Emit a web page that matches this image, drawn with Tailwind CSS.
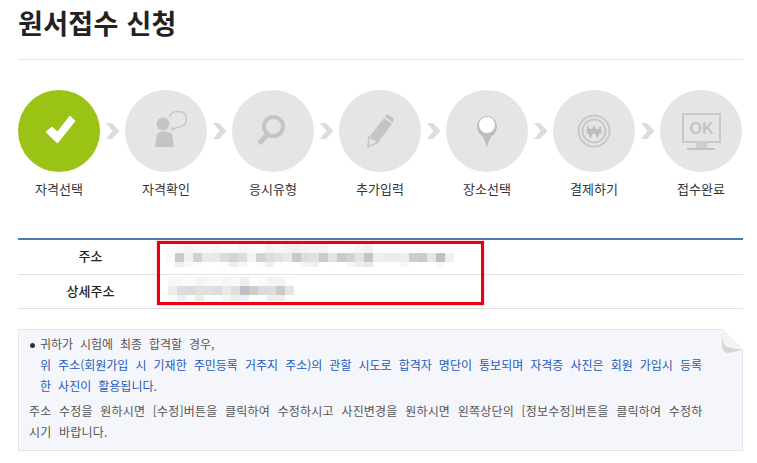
<!DOCTYPE html>
<html lang="ko">
<head>
    <meta charset="UTF-8">
    <title>원서접수 신청</title>
    <script src="https://cdn.jsdelivr.net/npm/@tailwindcss/browser@4"></script>
</head>
<body class="bg-white font-['Noto_Sans_CJK_KR','Noto_Sans',sans-serif] text-[#222]">
<div class="w-[725px] ml-[18px]">

    <!-- 제목 -->
    <div class="h-[60px] border-b border-[#e6e6e6]">
        <h1 class="text-[27px] leading-[45px] tracking-[0.3px] font-bold text-[#222]">원서접수 신청</h1>
    </div>

    <!-- 단계 -->
    <div class="flex mt-[30px]">
        <div class="w-[82px] flex flex-col items-center">
            <svg class="w-[82px] h-[82px]" viewBox="0 0 82 82">
                <circle cx="41" cy="41" r="41" fill="#9bc316"/>
                <polygon points="28,42 34,37 39.5,42 52,26 57,31 39.5,53" fill="#fff" stroke="#fff" stroke-linejoin="round"/>
            </svg>
            <span class="mt-[7px] text-[13px] leading-5 whitespace-nowrap text-[#333]">자격선택</span>
        </div>
        <div class="w-[25px] h-[82px] flex items-center justify-center">
            <svg class="w-[14px] h-[16px]" viewBox="0 0 14 16"><polygon points="0,0 6,0 13.5,8 6,16 0,16 6.5,8" fill="#dcdcdc"/></svg>
        </div>
        <div class="w-[82px] flex flex-col items-center">
            <svg class="w-[82px] h-[82px]" viewBox="0 0 82 82">
                <circle cx="41" cy="41" r="41" fill="#e5e5e5"/>
                <circle cx="38" cy="34" r="6.5" fill="#c4c4c4"/>
                <path d="M30 57 L31.500 46 Q32.500 41.500 38 41.500 Q47 41.500 47.500 46 L49 57 Z" fill="#c4c4c4"/>
                <path d="M44.500 27 Q46 21.500 52.500 21.500 Q61.500 21.500 61.500 29 Q61.500 36.500 52 37.500 L47 40 L47 36.500" fill="none" stroke="#c8c8c8" stroke-width="1.500"/>
            </svg>
            <span class="mt-[7px] text-[13px] leading-5 whitespace-nowrap text-[#333]">자격확인</span>
        </div>
        <div class="w-[25px] h-[82px] flex items-center justify-center">
            <svg class="w-[14px] h-[16px]" viewBox="0 0 14 16"><polygon points="0,0 6,0 13.5,8 6,16 0,16 6.5,8" fill="#dcdcdc"/></svg>
        </div>
        <div class="w-[82px] flex flex-col items-center">
            <svg class="w-[82px] h-[82px]" viewBox="0 0 82 82">
                <circle cx="41" cy="41" r="41" fill="#e5e5e5"/>
                <circle cx="41.500" cy="36.500" r="9.500" fill="none" stroke="#c4c4c4" stroke-width="4"/>
                <line x1="28.500" y1="52" x2="35" y2="45" stroke="#c4c4c4" stroke-width="5" stroke-linecap="round"/>
            </svg>
            <span class="mt-[7px] text-[13px] leading-5 whitespace-nowrap text-[#333]">응시유형</span>
        </div>
        <div class="w-[25px] h-[82px] flex items-center justify-center">
            <svg class="w-[14px] h-[16px]" viewBox="0 0 14 16"><polygon points="0,0 6,0 13.5,8 6,16 0,16 6.5,8" fill="#dcdcdc"/></svg>
        </div>
        <div class="w-[82px] flex flex-col items-center">
            <svg class="w-[82px] h-[82px]" viewBox="0 0 82 82">
                <circle cx="41" cy="41" r="41" fill="#e5e5e5"/>
                <polygon points="31,46 45,28 53,34 39.500,51.500" fill="#c4c4c4"/>
                <polygon points="46,26.500 48,24 54,28 55,30 53.500,32.500" fill="#c4c4c4"/>
                <path d="M30 47 L29 57 L39.500 52 Z" fill="#e5e5e5" stroke="#c4c4c4" stroke-width="1.500"/>
            </svg>
            <span class="mt-[7px] text-[13px] leading-5 whitespace-nowrap text-[#333]">추가입력</span>
        </div>
        <div class="w-[25px] h-[82px] flex items-center justify-center">
            <svg class="w-[14px] h-[16px]" viewBox="0 0 14 16"><polygon points="0,0 6,0 13.5,8 6,16 0,16 6.5,8" fill="#dcdcdc"/></svg>
        </div>
        <div class="w-[82px] flex flex-col items-center">
            <svg class="w-[82px] h-[82px]" viewBox="0 0 82 82">
                <circle cx="41" cy="41" r="41" fill="#e5e5e5"/>
                <path d="M31 36 A10 10 0 0 1 51 36 Q51 42 46 46 Q42.500 50 41 58 Q39.500 50 36 46 Q31 42 31 36 Z" fill="#bdbdbd"/>
                <circle cx="41" cy="35" r="8" fill="#fff"/>
            </svg>
            <span class="mt-[7px] text-[13px] leading-5 whitespace-nowrap text-[#333]">장소선택</span>
        </div>
        <div class="w-[25px] h-[82px] flex items-center justify-center">
            <svg class="w-[14px] h-[16px]" viewBox="0 0 14 16"><polygon points="0,0 6,0 13.5,8 6,16 0,16 6.5,8" fill="#dcdcdc"/></svg>
        </div>
        <div class="w-[82px] flex flex-col items-center">
            <svg class="w-[82px] h-[82px]" viewBox="0 0 82 82">
                <circle cx="41" cy="41" r="41" fill="#e5e5e5"/>
                <circle cx="41" cy="41" r="15.500" fill="none" stroke="#c8c8c8" stroke-width="2"/>
                <circle cx="41" cy="41" r="11.500" fill="none" stroke="#c8c8c8" stroke-width="2"/>
                <path d="M34.500 36.500 L37.500 46 L41 37.500 L44.500 46 L47.500 36.500 M33.500 40 H48.500 M33.500 42.500 H48.500" fill="none" stroke="#bcbcbc" stroke-width="2"/>
            </svg>
            <span class="mt-[7px] text-[13px] leading-5 whitespace-nowrap text-[#333]">결제하기</span>
        </div>
        <div class="w-[25px] h-[82px] flex items-center justify-center">
            <svg class="w-[14px] h-[16px]" viewBox="0 0 14 16"><polygon points="0,0 6,0 13.5,8 6,16 0,16 6.5,8" fill="#dcdcdc"/></svg>
        </div>
        <div class="w-[82px] flex flex-col items-center">
            <svg class="w-[82px] h-[82px]" viewBox="0 0 82 82">
                <circle cx="41" cy="41" r="41" fill="#e5e5e5"/>
                <rect x="23" y="24" width="37" height="28" fill="none" stroke="#c8c8c8" stroke-width="2"/>
                <text x="41.500" y="44" text-anchor="middle" font-family="Liberation Sans" font-weight="700" font-size="16" fill="#c4c4c4">OK</text>
                <rect x="36" y="52" width="11" height="6" fill="#cfcfcf"/>
                <rect x="27" y="58" width="28" height="2" fill="#c4c4c4"/>
            </svg>
            <span class="mt-[7px] text-[13px] leading-5 whitespace-nowrap text-[#333]">접수완료</span>
        </div>
    </div>

    <!-- 주소 -->
    <div class="relative mt-[39px] border-t-2 border-[#4a7aad]">
        <div class="flex h-[35px] border-b border-[#e2e2e2]">
            <div class="w-[145px] flex items-center justify-center pb-[3px] text-[13px] font-medium text-[#222]">주소</div>
            <div class="flex-1 relative"><svg id="addr1" class="absolute left-[3px] top-[4px] w-[288px] h-[23px]"></svg></div>
        </div>
        <div class="flex h-[34px] border-b border-[#e2e2e2]">
            <div class="w-[145px] flex items-center justify-center pb-[2px] text-[13px] font-medium text-[#222]">상세주소</div>
            <div class="flex-1 relative"><svg id="addr2" class="absolute left-[5px] top-[2px] w-[126px] h-[24px]"></svg></div>
        </div>
        <!-- 빨간 표시 -->
        <div class="absolute left-[139px] top-[1px] w-[327px] h-[64px] border-[3px] border-[#e60012] shadow-[0_0_1px_#ff4050]"></div>
    </div>

    <!-- 안내 -->
    <div class="relative mt-[20px] h-[122px] border border-[#e3e5ea] bg-[#f5f6fb] pl-[10px] pt-[3px] text-[12px] leading-[21px] whitespace-nowrap text-[#555]">
        <div class="pl-[11px] relative">
            <span class="absolute left-[1px] top-[10px] w-[5px] h-[5px] rounded-full bg-[#333]"></span>
            <p class="[word-spacing:3.5px]">귀하가 시험에 최종 합격할 경우,</p>
            <p class="[word-spacing:3.7px] text-[#1c5cb8]">위 주소(회원가입 시 기재한 주민등록 거주지 주소)의 관할 시도로 합격자 명단이 통보되며 자격증 사진은 회원 가입시 등록<br>한 사진이 활용됩니다.</p>
        </div>
        <p class="mt-[4px] [word-spacing:4px] tracking-[0.2px]">주소 수정을 원하시면 [수정]버튼을 클릭하여 수정하시고 사진변경을 원하시면 왼쪽상단의 [정보수정]버튼을 클릭하여 수정하<br>시기 바랍니다.</p>
        <!-- 접힌 모서리 -->
        <svg class="absolute right-[-1px] top-[-1px] w-[21px] h-[25px]" viewBox="0 0 21 25">
            <polygon points="0,0 21,0 21,21" fill="#fff"/>
            <path d="M0 0 L20.500 20.500 Q12 23 5 24 Q-2 22 0 0 Z" fill="#f4f4f4" stroke="#dedede" stroke-width="0.500"/>
            <path d="M0 3 Q0 15 5 18 Q12 20 20.500 20.500 Q12 23 5 24 Q-2 22 0 3 Z" fill="#d6d6d6"/>
        </svg>
    </div>
</div>

<script>
    // 주소 모자이크
    const mosaic = {
        addr1: { rows: [
            'fcfcfc f8f8f8 f5f5f5 f8f8f8 f8f8f8 f6f6f6 fafafa fdfdfd f6f6f6 fbfbfb fefefe f4f4f5 f7f7f6 f2f3f4 f0f0f0 f5f4f3 f5f5f5 f4f4f4 fefefe fefefe fcfcfc f6f6f6 f2f2f2 ffffff ffffff ffffff ffffff ffffff ffffff ffffff ffffff ffffff',
            'fafafa cacaca f0f0f0 d2d1cc e8eaec e8e8ea dfdcd8 d2d5d6 dedad8 f2f4f3 d0d2d5 dfdbd6 e0e3e6 e6eaec c9c9c7 e0ddd9 e0e2e4 cacaca e4e3de c8cacd d0d3d3 e2e4e4 c4c6c8 f3eee8 e8edf0 e8eaec f0efed d0cecd c8cbcc e8e6e4 bfc0c1 eeeff0',
            'ffffff eeeeee f8f8f8 fafafa ffffff ffffff fdfdfd eeeff0 f8f6f6 ffffff fbfbfb f0efee fdfdfd ffffff fcfcfc f6f5f4 eff0f1 ffffff fefefe ffffff f8f7f5 edeeee e9e9e9 ffffff ffffff ffffff f8f8f8 ffffff ffffff ffffff f6f6f6 ffffff'
        ], heights: [9, 9, 5] },
        addr2: { rows: [
            'f9f8f8 f8f8f8 fbfbfb f5f4f4 f8f8f8 f9f9f9 f6f5f5 fafafa eef0f0 fcfcfc fbfafa f3f4f5 f3f3f3 fbfcfc',
            'efeceb dcdcdc d9dcdf e2dfdc e0dfdf dadde0 e9e9e9 e2dedc bcc1c7 cfcdc8 d9dcde dbdddf cdcbc8 e2e4e6',
            'fbfbfb eeeeee fcfcfc eeeceb fcfcfc fdfdfd f6f5f4 eeeeee eeeff0 ffffff fefefe efeeec efeeec ffffff'
        ], heights: [9, 9, 6] }
    };
    for (const id in mosaic) {
        const svg = document.getElementById(id);
        let y = 0;
        mosaic[id].rows.forEach((row, r) => {
            row.split(' ').forEach((color, c) => {
                const rect = document.createElementNS('http://www.w3.org/2000/svg', 'rect');
                rect.setAttribute('x', c * 9);
                rect.setAttribute('y', y);
                rect.setAttribute('width', 9);
                rect.setAttribute('height', mosaic[id].heights[r]);
                rect.setAttribute('fill', '#' + color);
                svg.appendChild(rect);
            });
            y += mosaic[id].heights[r];
        });
    }
</script>
</body>
</html>
